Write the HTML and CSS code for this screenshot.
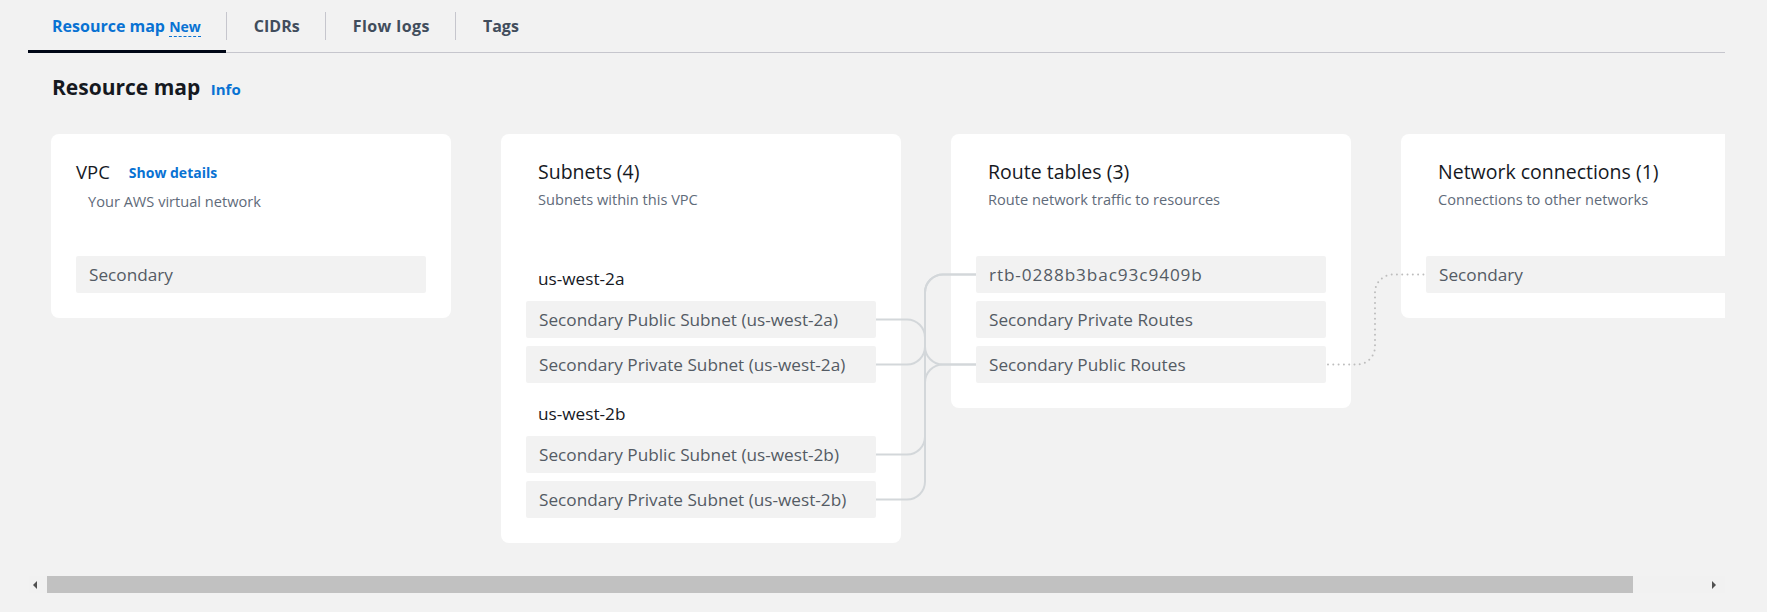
FILE: index.html
```html
<!DOCTYPE html>
<html lang="en">
<head>
<meta charset="utf-8">
<title>Resource map</title>
<link rel="stylesheet" href="styles.css">
</head>
<body>
<div class="page">
  <nav class="tabs">
    <div class="tab active">Resource map <span class="tab-new">New</span></div>
    <span class="tab-sep"></span>
    <div class="tab">CIDRs</div>
    <span class="tab-sep"></span>
    <div class="tab tab-wide">Flow logs</div>
    <span class="tab-sep"></span>
    <div class="tab">Tags</div>
  </nav>

  <h2 class="section-title">Resource map <span class="info">Info</span></h2>

  <div class="map">
    <div class="map-row">
      <section class="card">
        <div class="card-head vpc-head">
          <span class="card-title vpc-title">VPC</span>
          <span class="link">Show details</span>
        </div>
        <div class="card-desc vpc-desc">Your AWS virtual network</div>
        <div class="item-list">
          <div class="item">Secondary</div>
        </div>
      </section>

      <section class="card">
        <div class="card-head"><span class="card-title">Subnets (4)</span></div>
        <div class="card-desc">Subnets within this VPC</div>
        <div class="az-label first">us-west-2a</div>
        <div class="az-items">
          <div class="item">Secondary Public Subnet (us-west-2a)</div>
          <div class="item">Secondary Private Subnet (us-west-2a)</div>
        </div>
        <div class="az-label">us-west-2b</div>
        <div class="az-items">
          <div class="item">Secondary Public Subnet (us-west-2b)</div>
          <div class="item">Secondary Private Subnet (us-west-2b)</div>
        </div>
      </section>

      <section class="card">
        <div class="card-head"><span class="card-title">Route tables (3)</span></div>
        <div class="card-desc">Route network traffic to resources</div>
        <div class="item-list">
          <div class="item item-id">rtb-0288b3bac93c9409b</div>
          <div class="item">Secondary Private Routes</div>
          <div class="item">Secondary Public Routes</div>
        </div>
      </section>

      <section class="card">
        <div class="card-head"><span class="card-title">Network connections (1)</span></div>
        <div class="card-desc">Connections to other networks</div>
        <div class="item-list">
          <div class="item">Secondary</div>
        </div>
      </section>
    </div>

    <svg class="connectors" width="1697" height="409" viewBox="0 0 1697 409" aria-hidden="true">
      <g fill="none" stroke="#d3d7da" stroke-width="2">
        <path d="M848 185.5 H879 A18 18 0 0 1 897 203.5 V212.5 A18 18 0 0 0 915 230.5 H948"/>
        <path d="M848 230.5 H879 A18 18 0 0 0 897 212.5 V158.5 A18 18 0 0 1 915 140.5 H948"/>
        <path d="M848 320.5 H879 A18 18 0 0 0 897 302.5 V248.5 A18 18 0 0 1 915 230.5 H948"/>
        <path d="M848 365.5 H879 A18 18 0 0 0 897 347.5 V158.5 A18 18 0 0 1 915 140.5 H948"/>
      </g>
      <path d="M1300 230.5 H1329 A18 18 0 0 0 1347 212.5 V158.5 A18 18 0 0 1 1365 140.5 H1396" fill="none" stroke="#bdbdbd" stroke-width="2" stroke-linecap="round" stroke-dasharray="0 5.3"/>
    </svg>
  </div>

  <div class="hscroll">
    <div class="hs-btn"><span class="arrow-left"></span></div>
    <div class="hs-track"><div class="hs-thumb"></div></div>
    <div class="hs-btn"><span class="arrow-right"></span></div>
  </div>
</div>
</body>
</html>
```

FILE: styles.css
```css
* {
  box-sizing: border-box;
}

html, body {
  margin: 0;
  padding: 0;
  background: #f2f2f2;
}

body {
  font-family: "Open Sans", "Noto Sans", "Liberation Sans", sans-serif;
  color: #16191f;
  width: 1767px;
  height: 612px;
  overflow: hidden;
}

.page {
  margin: 0 42px 0 28px;
}

/* Tabs */
.tabs {
  display: flex;
  align-items: center;
  height: 53px;
  border-bottom: 1px solid #c6c6cd;
}

.tab {
  position: relative;
  height: 52px;
  display: flex;
  align-items: center;
  padding: 0 25px 0 27px;
  font-size: 16px;
  font-weight: 700;
  color: #414d5c;
  white-space: pre;
}

.tab.active {
  padding-left: 24px;
  color: #0972d3;
}

.tab-wide {
  letter-spacing: 0.45px;
}

.tab.active::after {
  content: "";
  position: absolute;
  left: 0;
  right: 0;
  bottom: -1px;
  height: 3px;
  background: #000716;
}

.tab-new {
  font-size: 14px;
  line-height: 18px;
  border-bottom: 1px dashed #0972d3;
  margin-top: 3px;
}

.tab-sep {
  width: 1px;
  height: 28px;
  background: #c6c6cd;
  flex-shrink: 0;
}

/* Heading */
.section-title {
  margin: 19px 0 0;
  padding-left: 24px;
  font-size: 21px;
  line-height: 30px;
  font-weight: 700;
  color: #16191f;
}

.info {
  font-size: 15px;
  font-weight: 700;
  color: #0972d3;
  margin-left: 5px;
}

/* Map */
.map {
  position: relative;
  margin-top: 30px;
  overflow: hidden;
  padding: 0 0 33px 23px;
}

.map-row {
  display: flex;
  align-items: flex-start;
  gap: 50px;
}

.connectors {
  position: absolute;
  left: 0;
  top: 0;
}

.card {
  flex: 0 0 400px;
  width: 400px;
  background: #ffffff;
  border-radius: 8px;
  padding: 25px;
}

.card-head {
  display: flex;
  align-items: center;
  height: 26px;
  padding-left: 12px;
}

.vpc-head {
  padding-left: 0;
}

.card-title {
  font-size: 19.5px;
  line-height: 26px;
  color: #16191f;
}

.vpc-title {
  font-size: 18.5px;
}

.link {
  margin-left: 19px;
  font-size: 14px;
  font-weight: 700;
  color: #0972d3;
}

.card-desc {
  margin-top: 4px;
  padding-left: 12px;
  font-size: 14.6px;
  line-height: 20px;
  color: #5f6b7a;
}

.vpc-desc {
  margin-top: 6px;
}

.item-list,
.az-items {
  display: flex;
  flex-direction: column;
  gap: 8px;
}

.item-list {
  margin-top: 47px;
}

.vpc-desc + .item-list {
  margin-top: 45px;
}

.item {
  height: 37px;
  display: flex;
  align-items: center;
  padding-left: 13px;
  background: #f2f2f2;
  border-radius: 2px;
  font-size: 17.2px;
  line-height: 24px;
  color: #545b64;
  white-space: nowrap;
}

.item-id {
  letter-spacing: 0.9px;
}

.az-label {
  margin: 19px 0 10px;
  padding-left: 12px;
  font-size: 17.2px;
  line-height: 24px;
  color: #16191f;
}

.az-label.first {
  margin-top: 58px;
}

/* Fake horizontal scrollbar */
.hscroll {
  display: flex;
  height: 17px;
  margin-left: 1px;
}

.hs-btn {
  width: 17px;
  height: 17px;
  display: flex;
  align-items: center;
  padding-left: 4px;
  background: #f1f1f1;
}

.hs-track {
  flex: 1;
  background: #f1f1f1;
  padding-left: 1px;
}

.hs-thumb {
  width: 1586px;
  height: 17px;
  background: #c1c1c1;
}

.arrow-left {
  width: 0;
  height: 0;
  border-top: 4.5px solid transparent;
  border-bottom: 4.5px solid transparent;
  border-right: 4px solid #505050;
}

.arrow-right {
  width: 0;
  height: 0;
  border-top: 4.5px solid transparent;
  border-bottom: 4.5px solid transparent;
  border-left: 4px solid #505050;
}
```
